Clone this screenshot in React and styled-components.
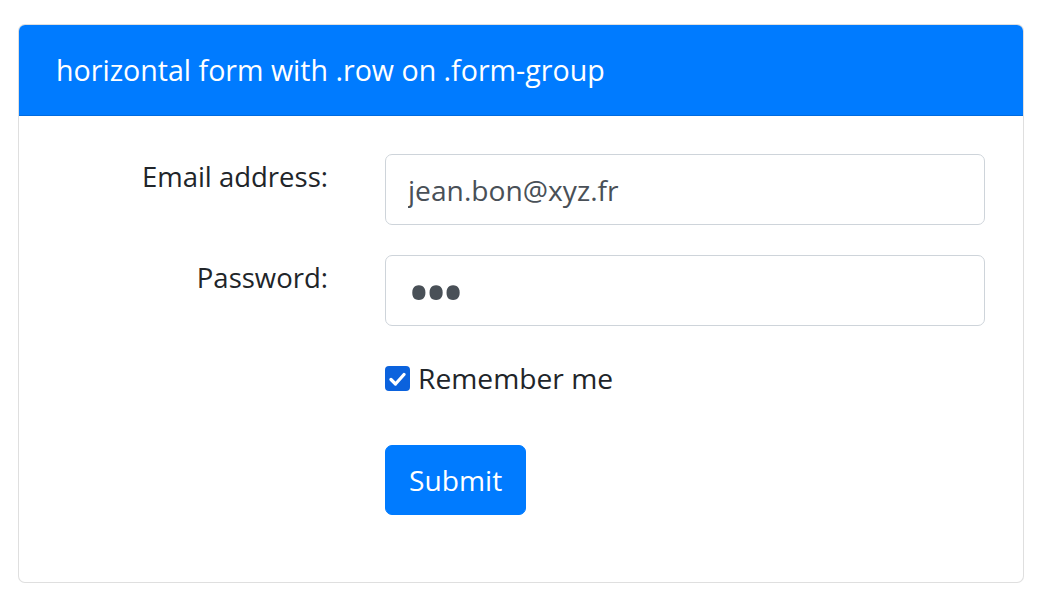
import React from "react";
import styled, { createGlobalStyle } from "styled-components";

const Global = createGlobalStyle`
  html, body { margin: 0; padding: 0; background: #fff; }
  body { font-family: "Open Sans", "Noto Sans", sans-serif; color: #212529; }
  * { box-sizing: border-box; }
`;

const Page = styled.div`
  padding: 24px 14px 0 18px;
`;

const Card = styled.div`
  width: 1006px;
  border: 1px solid rgba(0, 0, 0, 0.125);
  border-radius: 7px;
  overflow: hidden;
  background: #fff;
`;

const Header = styled.div`
  height: 91px;
  background: #007bff;
  color: #fff;
  display: flex;
  align-items: center;
  padding: 0 37px 2px 37px;
  font-size: 28.6px;
  border-bottom: 1px solid rgba(0, 0, 0, 0.125);
`;

const Body = styled.form`
  padding: 38px 37px 37px 37px;
  display: flex;
  flex-direction: column;
`;

const Row = styled.div`
  display: grid;
  grid-template-columns: 328px 1fr;
  margin: 0 0 ${(p) => p.$mb ?? 30}px -28px;
  align-items: start;
`;

const Label = styled.label`
  text-align: right;
  padding: 0 28px;
  font-size: 27.5px;
  line-height: 45px;
`;

const Field = styled.div`
  padding-left: 29px;
  display: flex;
  align-items: center;
`;

const Input = styled.input`
  width: 600px;
  height: 71px;
  border: 1px solid #ced4da;
  border-radius: 7px;
  padding: 0 22px;
  font-family: inherit;
  font-size: 28.2px;
  color: #495057;
  background: #fff;
  outline: none;
`;

const PasswordInput = styled(Input)`
  font-size: 63px;
  letter-spacing: -6.5px;
  padding-left: 21px;
`;

const CheckLabel = styled.label`
  display: flex;
  align-items: center;
  gap: 8px;
  font-size: 28.2px;
  line-height: 45px;
`;

const Box = styled.span`
  width: 25px;
  height: 25px;
  border-radius: 4px;
  background: #0b62dd;
  display: inline-flex;
  align-items: center;
  justify-content: center;
`;

const Button = styled.button`
  height: 70px;
  padding: 0 23px;
  border: 1px solid #007bff;
  border-radius: 7px;
  background: #007bff;
  color: #fff;
  font-family: inherit;
  font-size: 28.2px;
  cursor: pointer;
`;

export default function App() {
  return (
    <>
      <Global />
      <Page>
        <Card>
          <Header>horizontal form with .row on .form-group</Header>
          <Body onSubmit={(e) => e.preventDefault()}>
            <Row>
              <Label htmlFor="email">Email address:</Label>
              <Field>
                <Input id="email" type="email" defaultValue="jean.bon@xyz.fr" readOnly />
              </Field>
            </Row>
            <Row>
              <Label htmlFor="pwd">Password:</Label>
              <Field>
                <PasswordInput id="pwd" type="password" defaultValue="abc" readOnly />
              </Field>
            </Row>
            <Row $mb={44}>
              <span />
              <Field>
                <CheckLabel>
                  <Box>
                    <svg width="17" height="14" viewBox="0 0 17 14">
                      <path d="M2 7.5 L6.5 12 L15 2.5" fill="none" stroke="#fff" strokeWidth="3.2" strokeLinecap="round" strokeLinejoin="round" />
                    </svg>
                  </Box>
                  Remember me
                </CheckLabel>
              </Field>
            </Row>
            <Row $mb={30}>
              <span />
              <Field>
                <Button type="submit">Submit</Button>
              </Field>
            </Row>
          </Body>
        </Card>
      </Page>
    </>
  );
}
